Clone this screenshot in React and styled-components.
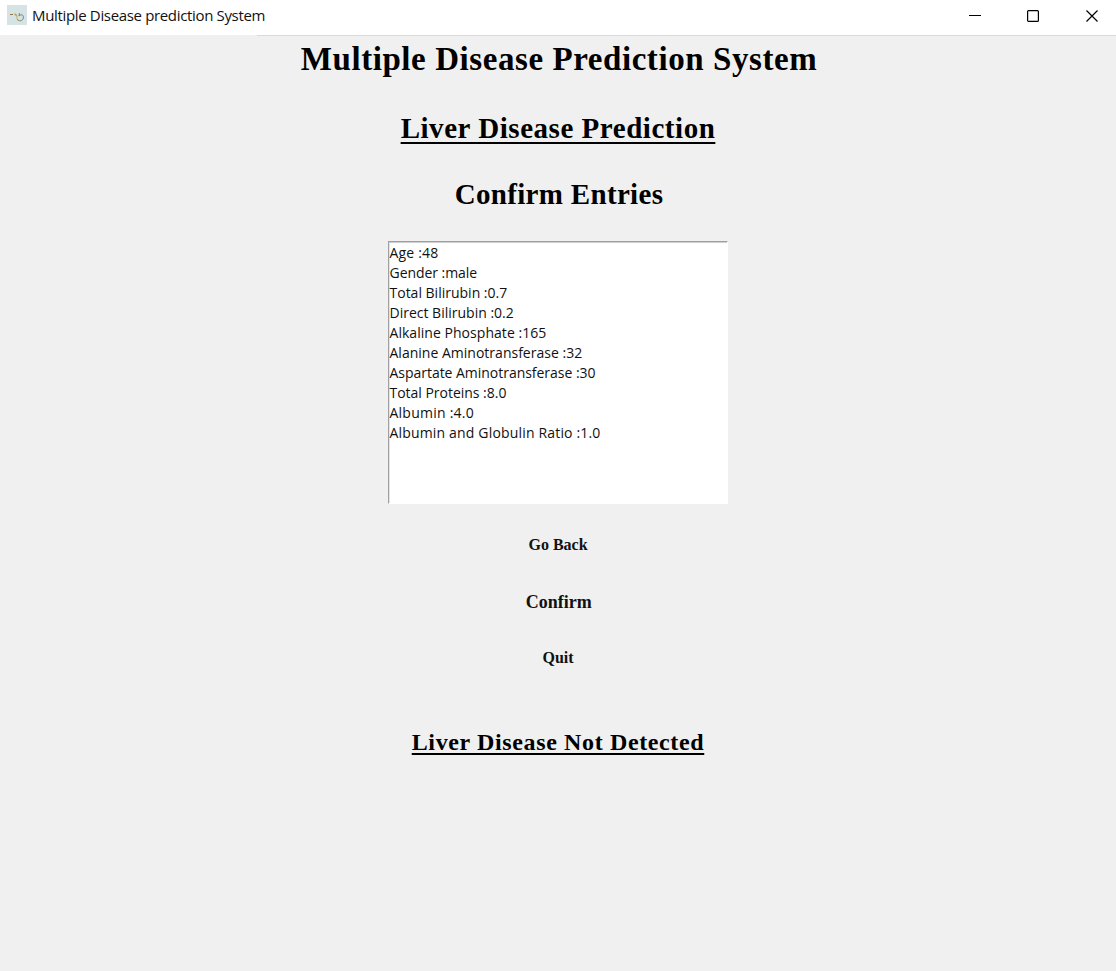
import React from 'react';
import styled, { createGlobalStyle } from 'styled-components';

const Global = createGlobalStyle`
  * { box-sizing: border-box; }
  html, body { margin: 0; background: #f0f0f0; }
`;
const Window = styled.div`
  width: 1116px; height: 971px; background: #f0f0f0; overflow: hidden;
`;
const TitleBar = styled.header`
  display: flex; align-items: center; height: 36px; padding: 0 18px 5px 7px;
  background: linear-gradient(to right, #f0f0f0 257px, #dadada 257px) bottom / 100% 1px no-repeat, #fff;
`;
const AppIcon = styled.svg`width: 20px; height: 20px; margin: 0 5px 1px 0; flex: none;`;
const Caption = styled.span`
  flex: 1; padding-bottom: 2px; font: 15px/20px "Open Sans", "Noto Sans", sans-serif;
  letter-spacing: -0.34px; color: #111; white-space: nowrap;
`;
const Controls = styled.div`
  display: flex; gap: 46px;
  & > :last-child { margin-left: 1px; }
`;
const ControlIcon = styled.svg`width: 12px; height: 12px; display: block;`;
const Body = styled.main`display: flex; flex-direction: column; align-items: center;`;
const Heading = styled.h1`
  margin: ${p => p.$top}px 0 0;
  padding-left: ${p => p.$inset || 0}px;
  font: bold ${p => p.$size}px/${p => p.$line}px "Liberation Serif", "Times New Roman", serif;
  letter-spacing: ${p => p.$spacing}px;
  font-variant-ligatures: none;
  color: #000; white-space: nowrap;
  text-decoration: ${p => (p.$underlined ? 'underline' : 'none')};
  text-decoration-thickness: 2px; text-underline-offset: ${p => p.$offset || 4}px; text-decoration-skip-ink: none;
`;
const EntryList = styled.ul`
  width: 340px; height: 263px; margin: 30px 0 0; padding: 1px 0 0; list-style: none;
  background: #fff; border: 1px solid #fff; border-top-color: #a0a0a0; border-left-color: #a0a0a0;
  box-shadow: inset 0 1px 0 #cfcfcf, inset 1px 0 0 #e4e4e4;
`;
const Entry = styled.li`
  height: 20px; padding-left: 0.5px; font: 14px/20px "Open Sans", "Noto Sans", sans-serif;
  letter-spacing: ${p => p.$spacing}px; color: #111; white-space: nowrap;
`;
const Action = styled.button`
  margin: ${p => p.$top}px 0 0; padding: 0 0 0 ${p => p.$inset || 0}px; border: 0; background: none; height: 20px;
  font: bold ${p => p.$size}px/20px "Liberation Serif", "Times New Roman", serif;
  font-variant-ligatures: none; color: #111;
`;

const entries = [
  { text: 'Age :48', spacing: 0.17 },
  { text: 'Gender :male', spacing: -0.05 },
  { text: 'Total Bilirubin :0.7', spacing: 0 },
  { text: 'Direct Bilirubin :0.2', spacing: 0 },
  { text: 'Alkaline Phosphate :165', spacing: 0.04 },
  { text: 'Alanine Aminotransferase :32', spacing: 0.01 },
  { text: 'Aspartate Aminotransferase :30', spacing: -0.03 },
  { text: 'Total Proteins :8.0', spacing: -0.02 },
  { text: 'Albumin :4.0', spacing: 0.24 },
  { text: 'Albumin and Globulin Ratio :1.0', spacing: 0.17 },
];

export default function App() {
  return (
    <Window>
      <Global />
      <TitleBar>
        <AppIcon viewBox="0 0 20 20">
          <rect width="20" height="20" fill="#d5e3e4" />
          <path d="M3 9.5h3M8 9l2 2" stroke="#8a7a45" strokeWidth="1.2" fill="none" />
          <path d="M7 8.5l3 2.5v3.500l1.500 1" stroke="#d5b347" fill="none" />
          <path d="M12.500 8l-.5 3c3-3 5.500 0 4 3-1.500 2.500-4 2-5.500.5" stroke="#777867" strokeWidth=".9" fill="none" />
        </AppIcon>
        <Caption>Multiple Disease prediction System</Caption>
        <Controls>
          <ControlIcon viewBox="0 0 12 12"><path d="M0 5.500h12" stroke="#000" /></ControlIcon>
          <ControlIcon viewBox="0 0 12 12"><rect x=".6" y=".6" width="10.8" height="10.8" rx="1" stroke="#000" strokeWidth="1.2" fill="none" /></ControlIcon>
          <ControlIcon viewBox="0 0 12 12"><path d="M.5.5l11 11M11.5.5l-11 11" stroke="#000" strokeWidth="1.2" /></ControlIcon>
        </Controls>
      </TitleBar>
      <Body>
        <Heading $top={4} $size={33} $line={38} $spacing={0.57} $inset={2}>Multiple Disease Prediction System</Heading>
        <Heading as="h2" $top={33} $size={29} $line={34} $spacing={0.54} $underlined>Liver Disease Prediction</Heading>
        <Heading as="h2" $top={32} $size={29} $line={34} $spacing={0.32} $inset={2}>Confirm Entries</Heading>
        <EntryList>
          {entries.map(e => <Entry key={e.text} $spacing={e.spacing}>{e.text}</Entry>)}
        </EntryList>
        <Action $top={31} $size={16}>Go Back</Action>
        <Action $top={37} $size={18} $inset={1.5}>Confirm</Action>
        <Action $top={36} $size={16}>Quit</Action>
        <Heading as="h2" $top={60} $size={24} $line={28} $spacing={0.63} $underlined $offset={3}>Liver Disease Not Detected</Heading>
      </Body>
    </Window>
  );
}
